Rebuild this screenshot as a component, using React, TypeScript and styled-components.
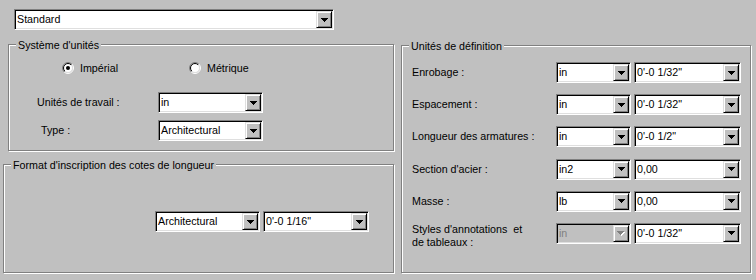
import React, {FC} from "react";
import styled, {createGlobalStyle} from "styled-components";

const GlobalStyle = createGlobalStyle`
  html, body {
    margin: 0;
    padding: 0;
    background: #c0c0c0;
  }
  body {
    font-family: "Liberation Sans", Arial, sans-serif;
    font-size: 10.7px;
    color: #000;
  }
`

const Page = styled.div`
  width: 756px;
  height: 280px;
  box-sizing: border-box;
  padding-top: 9px;
  background: #c0c0c0;
  overflow: hidden;
`
const TopRow = styled.div`
  display: flex;
  padding-left: 14px;
`
const Main = styled.div`
  display: flex;
  align-items: flex-start;
  margin-top: 14px;
`
const LeftCol = styled.div`
  display: flex;
  flex-direction: column;
  align-items: flex-start;
  width: 391px;
  padding-left: 3px;
`

// etched group box, like a win32 GROUPBOX
const Group = styled.div<{$w: number, $h: number}>`
  position: relative;
  box-sizing: border-box;
  flex-shrink: 0;
  width: ${p => p.$w}px;
  height: ${p => p.$h}px;
  border: 1px solid #808080;
  box-shadow: 1px 1px 0 #fff, inset 1px 1px 0 #fff;
`
const UnitsGroup = styled(Group)`
  margin-left: 5px;
`
const FormatGroup = styled(Group)`
  margin-top: 13px;
`
const DefinitionGroup = styled(Group)`
  margin-top: 1px;
  margin-left: 7px;
`
const Caption = styled.span`
  position: absolute;
  top: -6px;
  left: 7px;
  padding: 0 2px;
  line-height: 13px;
  background: #c0c0c0;
  white-space: nowrap;
`

const ComboFrame = styled.div<{$w: number, $disabled?: boolean}>`
  box-sizing: border-box;
  flex-shrink: 0;
  display: flex;
  width: ${p => p.$w}px;
  height: 21px;
  padding: 1px;
  border: 1px solid;
  border-color: #808080 #fff #fff #808080;
  box-shadow: inset 1px 1px 0 #000, inset -1px -1px 0 #dfdfdf;
  background: ${p => p.$disabled ? '#c0c0c0' : '#fff'};
`
const ComboValue = styled.span<{$disabled?: boolean}>`
  flex: 1;
  min-width: 0;
  padding-left: 1px;
  line-height: 17px;
  white-space: pre;
  overflow: hidden;
  color: ${p => p.$disabled ? '#808080' : '#000'};
`
const DropButton = styled.span`
  box-sizing: border-box;
  display: flex;
  align-items: center;
  justify-content: center;
  width: 16px;
  height: 17px;
  background: #c0c0c0;
  border: 1px solid;
  border-color: #dfdfdf #000 #000 #dfdfdf;
  box-shadow: inset 1px 1px 0 #fff, inset -1px -1px 0 #808080;
`

const arrowPath = 'M0 0h7v1H0z M1 1h5v1H1z M2 2h3v1H2z M3 3h1v1H3z'

const Arrow: FC<{disabled?: boolean}> = ({disabled}) => disabled ? (
  <svg width="8" height="5" viewBox="0 0 8 5" shapeRendering="crispEdges">
    <path d={arrowPath} fill="#fff" transform="translate(1,1)"/>
    <path d={arrowPath} fill="#808080"/>
  </svg>
) : (
  <svg width="7" height="4" viewBox="0 0 7 4" shapeRendering="crispEdges">
    <path d={arrowPath} fill="#000"/>
  </svg>
)

interface ComboBoxProps {
  value: string
  width: number
  disabled?: boolean
}

const ComboBox: FC<ComboBoxProps> = ({value, width, disabled}) => (
  <ComboFrame $w={width} $disabled={disabled}>
    <ComboValue $disabled={disabled}>{value}</ComboValue>
    <DropButton><Arrow disabled={disabled}/></DropButton>
  </ComboFrame>
)

const RadioRow = styled.div`
  display: flex;
  margin: 17px 0 0 53px;
  height: 12px;
`
const RadioItem = styled.label<{$w: number}>`
  display: flex;
  align-items: center;
  gap: 6px;
  width: ${p => p.$w}px;
  line-height: 12px;
  white-space: nowrap;

  > svg {
    flex-shrink: 0;
  }
`

const Radio: FC<{checked?: boolean}> = ({checked}) => (
  <svg width="12" height="12" viewBox="0 0 12 12">
    <defs>
      <linearGradient id="radio-outer" x1="0" y1="0" x2="1" y2="1">
        <stop offset="0.5" stopColor="#808080"/>
        <stop offset="0.5" stopColor="#fff"/>
      </linearGradient>
      <linearGradient id="radio-inner" x1="0" y1="0" x2="1" y2="1">
        <stop offset="0.5" stopColor="#000"/>
        <stop offset="0.5" stopColor="#dfdfdf"/>
      </linearGradient>
    </defs>
    <circle cx="6" cy="6" r="5.5" fill="none" stroke="url(#radio-outer)"/>
    <circle cx="6" cy="6" r="4.5" fill="#fff" stroke="url(#radio-inner)"/>
    {checked && <circle cx="6" cy="6" r="2" fill="#000"/>}
  </svg>
)

const UnitsForm = styled.div`
  display: grid;
  grid-template-columns: 121px 105px;
  grid-auto-rows: 21px;
  row-gap: 7px;
  align-items: center;
  margin-top: 18px;
  padding-left: 28px;
`
const FieldLabel = styled.span<{$indent?: number, $top?: boolean}>`
  padding-left: ${p => p.$indent ?? 0}px;
  align-self: ${p => p.$top ? 'start' : 'center'};
  line-height: 13px;
  white-space: pre;
`

const FormatRow = styled.div`
  display: flex;
  gap: 3px;
  margin-top: 46px;
  padding-left: 151px;
`

const DefinitionGrid = styled.div`
  display: grid;
  grid-template-columns: 141px 75px 107px;
  grid-auto-rows: 21px;
  column-gap: 3px;
  row-gap: 11.2px;
  align-items: center;
  padding: 16px 0 0 10px;
`

const definitions = [
  {label: 'Enrobage :', unit: 'in', value: `0'-0 1/32"`},
  {label: 'Espacement :', unit: 'in', value: `0'-0 1/32"`},
  {label: 'Longueur des armatures :', unit: 'in', value: `0'-0 1/2"`},
  {label: "Section d'acier :", unit: 'in2', value: '0,00'},
  {label: 'Masse :', unit: 'lb', value: '0,00'},
  {label: "Styles d'annotations  et\nde tableaux :", unit: 'in', value: `0'-0 1/32"`, disabled: true},
]

const App: FC = () => {
  return (
    <Page>
      <GlobalStyle/>
      <TopRow>
        <ComboBox value="Standard" width={320}/>
      </TopRow>
      <Main>
        <LeftCol>
          <UnitsGroup $w={386} $h={107}>
            <Caption>Système d'unités</Caption>
            <RadioRow>
              <RadioItem $w={127}><Radio checked/>Impérial</RadioItem>
              <RadioItem $w={110}><Radio/>Métrique</RadioItem>
            </RadioRow>
            <UnitsForm>
              <FieldLabel>Unités de travail :</FieldLabel>
              <ComboBox value="in" width={105}/>
              <FieldLabel $indent={4}>Type :</FieldLabel>
              <ComboBox value="Architectural" width={105}/>
            </UnitsForm>
          </UnitsGroup>
          <FormatGroup $w={391} $h={109}>
            <Caption>Format d'inscription des cotes de longueur</Caption>
            <FormatRow>
              <ComboBox value="Architectural" width={105}/>
              <ComboBox value={`0'-0 1/16"`} width={106}/>
            </FormatRow>
          </FormatGroup>
        </LeftCol>
        <DefinitionGroup $w={350} $h={228}>
          <Caption>Unités de définition</Caption>
          <DefinitionGrid>
            {definitions.map(d => (
              <React.Fragment key={d.label}>
                <FieldLabel $top={d.disabled}>{d.label}</FieldLabel>
                <ComboBox value={d.unit} width={75} disabled={d.disabled}/>
                <ComboBox value={d.value} width={107}/>
              </React.Fragment>
            ))}
          </DefinitionGrid>
        </DefinitionGroup>
      </Main>
    </Page>
  )
}

export default App
